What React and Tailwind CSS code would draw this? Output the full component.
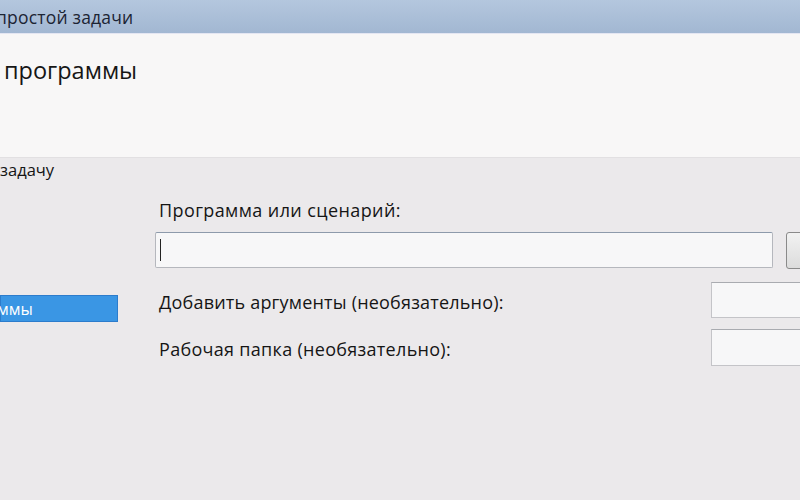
export default function App() {
  const font = { fontFamily: '"Open Sans", "Noto Sans", "DejaVu Sans", sans-serif' };
  return (
    <div className="flex h-[500px] w-[800px] flex-col overflow-hidden bg-[#ebe9eb] text-[#1a1a1a]" style={font}>
      {/* title bar */}
      <div className="flex h-[33px] shrink-0 items-center bg-gradient-to-b from-[#b4c7de] to-[#a2b7d2]">
        <span className="ml-[-4px] text-[17.5px] leading-[24px] tracking-[0.2px] text-[#1c2433]">простой задачи</span>
      </div>
      <div className="h-px shrink-0 bg-[#e4e6f2]" />

      {/* header */}
      <div className="flex h-[123px] shrink-0 items-start bg-[#f8f7f7] pl-[4px] pt-[25px]">
        <span className="text-[23.5px] leading-none text-[#161616]">программы</span>
      </div>
      <div className="h-px shrink-0 bg-[#e2e0e2]" />

      {/* body */}
      <div className="flex flex-1">
        <div className="flex w-[118px] shrink-0 flex-col">
          <div className="mt-[1px] text-[16.5px] leading-[22px] text-[#151515]">задачу</div>
          <div className="mt-[114px] flex h-[27px] items-center border border-[#2c7ccc] bg-[#3a96e4] text-[16px] text-white">
            <span className="ml-[-4px]">ммы</span>
          </div>
        </div>

        <div className="ml-[37px] flex flex-1 flex-col">
          <div className="mt-[40px] pl-[4px] text-[18px] leading-[24px] tracking-[0.4px] text-[#151515]">Программа или сценарий:</div>
          <div className="mt-[10px] flex items-start">
            <div className="flex h-[36px] w-[618px] items-center rounded-[2px] border border-[#b5b7bd] border-t-[#8d9aab] bg-[#f7f7f8] pl-[4px]">
              <div className="h-[22px] w-px bg-[#222]" />
            </div>
            <div className="ml-[13px] h-[37px] w-[30px] shrink-0 rounded-[3px] border border-[#8a8a8a] bg-gradient-to-b from-[#f2f2f2] to-[#dcdcdc]" />
          </div>

          <div className="mt-[13px] flex items-start">
            <div className="w-[556px] pl-[4px] pt-[8px] text-[18px] leading-[24px] tracking-[0.2px] text-[#151515]">Добавить аргументы (необязательно):</div>
            <div className="h-[36px] flex-1 border border-[#c4c4c8] border-t-[#a9abb0] bg-[#f7f7f8]" />
          </div>

          <div className="mt-[11px] flex items-start">
            <div className="w-[556px] pl-[4px] pt-[8px] text-[18px] leading-[24px] tracking-[0.3px] text-[#151515]">Рабочая папка (необязательно):</div>
            <div className="h-[37px] flex-1 border border-[#c4c4c8] border-t-[#a9abb0] bg-[#f7f7f8]" />
          </div>
        </div>
      </div>
    </div>
  );
}
